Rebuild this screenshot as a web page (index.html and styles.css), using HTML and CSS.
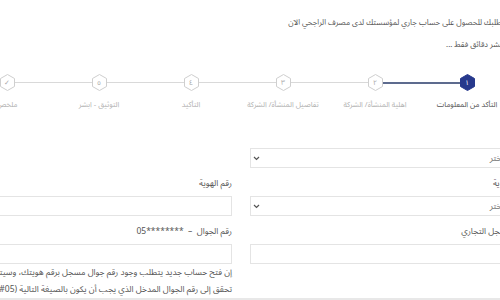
FILE: index.html
```html
<!DOCTYPE html>
<html lang="ar" dir="rtl">
<head>
    <meta charset="UTF-8">
    <meta name="viewport" content="width=device-width, initial-scale=1.0">
    <title>فتح حساب جاري</title>
    <link rel="stylesheet" href="styles.css">
</head>
<body>
    <div class="page">
        <!-- Intro text -->
        <div class="intro">
            <p>قدّم طلبك للحصول على حساب جاري لمؤسستك لدى مصرف الراجحي الآن</p>
            <p>في عشر دقائق فقط ...</p>
        </div>

        <!-- Steps -->
        <div class="steps">
            <div class="step active">
                <div class="track">
                    <span class="seg hidden"></span>
                    <span class="hex">
                        <svg width="15" height="17" viewBox="0 0 15 17"><polygon points="7.5,0.5 14.5,4.5 14.5,12.5 7.5,16.5 0.5,12.5 0.5,4.5"/></svg>
                        <b>١</b>
                    </span>
                    <span class="seg done"></span>
                </div>
                <div class="step-label">التأكد من المعلومات</div>
            </div>
            <div class="step">
                <div class="track">
                    <span class="seg done"></span>
                    <span class="hex">
                        <svg width="15" height="17" viewBox="0 0 15 17"><polygon points="7.5,0.5 14.5,4.5 14.5,12.5 7.5,16.5 0.5,12.5 0.5,4.5"/></svg>
                        <b>٢</b>
                    </span>
                    <span class="seg"></span>
                </div>
                <div class="step-label">اهلية المنشأة/ الشركة</div>
            </div>
            <div class="step">
                <div class="track">
                    <span class="seg"></span>
                    <span class="hex">
                        <svg width="15" height="17" viewBox="0 0 15 17"><polygon points="7.5,0.5 14.5,4.5 14.5,12.5 7.5,16.5 0.5,12.5 0.5,4.5"/></svg>
                        <b>٣</b>
                    </span>
                    <span class="seg"></span>
                </div>
                <div class="step-label">تفاصيل المنشأة/ الشركة</div>
            </div>
            <div class="step">
                <div class="track">
                    <span class="seg"></span>
                    <span class="hex">
                        <svg width="15" height="17" viewBox="0 0 15 17"><polygon points="7.5,0.5 14.5,4.5 14.5,12.5 7.5,16.5 0.5,12.5 0.5,4.5"/></svg>
                        <b>٤</b>
                    </span>
                    <span class="seg"></span>
                </div>
                <div class="step-label">التأكيد</div>
            </div>
            <div class="step">
                <div class="track">
                    <span class="seg"></span>
                    <span class="hex">
                        <svg width="15" height="17" viewBox="0 0 15 17"><polygon points="7.5,0.5 14.5,4.5 14.5,12.5 7.5,16.5 0.5,12.5 0.5,4.5"/></svg>
                        <b>٥</b>
                    </span>
                    <span class="seg"></span>
                </div>
                <div class="step-label">التوثيق - ابشر</div>
            </div>
            <div class="step">
                <div class="track">
                    <span class="seg"></span>
                    <span class="hex">
                        <svg width="15" height="17" viewBox="0 0 15 17"><polygon points="7.5,0.5 14.5,4.5 14.5,12.5 7.5,16.5 0.5,12.5 0.5,4.5"/></svg>
                        <b>✓</b>
                    </span>
                    <span class="seg hidden"></span>
                </div>
                <div class="step-label">ملخص</div>
            </div>
        </div>

        <!-- Form -->
        <div class="form-grid">
            <div class="field">
                <label>النوع</label>
                <div class="select">
                    <span>اختر</span>
                    <svg class="chev" width="7" height="5" viewBox="0 0 7 5"><path d="M1 1l2.5 2.5L6 1"/></svg>
                </div>
            </div>
            <div class="field"></div>

            <div class="field">
                <label>نوع الهوية</label>
                <div class="select">
                    <span>اختر</span>
                    <svg class="chev" width="7" height="5" viewBox="0 0 7 5"><path d="M1 1l2.5 2.5L6 1"/></svg>
                </div>
            </div>
            <div class="field">
                <label>رقم الهوية</label>
                <div class="input"></div>
            </div>

            <div class="field">
                <label>رقم السجل التجاري</label>
                <div class="input"></div>
            </div>
            <div class="field">
                <label>رقم الجوال &nbsp;–&nbsp; <bdi dir="ltr">05********</bdi></label>
                <div class="input"></div>
                <p class="hint">إن فتح حساب جديد يتطلب وجود رقم جوال مسجل برقم هويتك، وسيتم إرسال رمز<br>تحقق إلى رقم الجوال المدخل الذي يجب أن يكون بالصيغة التالية (05########)</p>
            </div>
        </div>
    </div>
</body>
</html>
```
FILE: styles.css
```css
body {
    margin: 0;
    background: #fff;
    font-family: "Noto Sans Arabic", "DejaVu Sans", sans-serif;
    color: #555;
    overflow: hidden;
    height: 300px;
}

/* wider than the window, spills past both edges */
.page {
    width: 568px;
    margin-right: -25px;
}

/* intro */
.intro {
    padding-top: 12px;
    padding-right: 10px;
}

.intro p {
    margin: 0;
    font-size: 7.8px;
    line-height: 22px;
    white-space: nowrap;
    color: #555;
}

/* steps */
.steps {
    display: flex;
    width: 552px;
    margin-right: 12px;
    margin-top: 18px;
}

.step {
    flex: 1;
    min-width: 0;
    display: flex;
    flex-direction: column;
    align-items: center;
}

.track {
    display: flex;
    align-items: center;
    width: 100%;
}

.seg {
    flex: 1;
    height: 1px;
    background: #d9d9d9;
}

.seg.done {
    height: 2px;
    background: #5d6b8e;
}

.seg.hidden {
    visibility: hidden;
}

.hex {
    display: grid;
    place-items: center;
    width: 15px;
    height: 17px;
}

.hex svg,
.hex b {
    grid-area: 1 / 1;
}

.hex polygon {
    fill: #fff;
    stroke: #cfcfcf;
    stroke-width: 1;
}

.hex b {
    font-weight: normal;
    font-size: 7px;
    color: #aaa;
}

.step.active polygon {
    fill: #27398c;
    stroke: #27398c;
}

.step.active .hex b {
    color: #fff;
}

.step-label {
    margin-top: 7px;
    font-size: 7.5px;
    line-height: 14px;
    color: #b3b3b3;
    white-space: nowrap;
}

.step.active .step-label {
    color: #555;
}

/* form */
.form-grid {
    display: grid;
    grid-template-columns: 275px 275px;
    column-gap: 18px;
    row-gap: 8px;
    margin-top: 16px;
    border-bottom: 2px solid #e8e8e8;
}

.field label {
    display: block;
    font-size: 8.5px;
    line-height: 14px;
    margin-bottom: 6px;
    color: #555;
    white-space: nowrap;
}

.select,
.input {
    box-sizing: border-box;
    height: 20px;
    border: 1px solid #e4e4e4;
    background: #fff;
}

.select {
    display: flex;
    align-items: center;
    justify-content: space-between;
    padding: 0 20px 0 2px;
    font-size: 9px;
    color: #777;
}

.chev path {
    fill: none;
    stroke: #555;
    stroke-width: 1.2;
}

.hint {
    margin: 0;
    font-size: 8.5px;
    line-height: 17px;
    color: #555;
    white-space: nowrap;
}
```
